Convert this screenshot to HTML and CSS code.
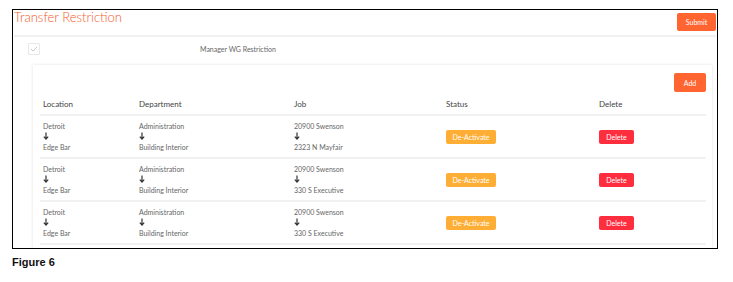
FILE: index.html
```html
<!DOCTYPE html>
<html>
<head>
<meta charset="utf-8">
<link rel="stylesheet" href="styles.css">
</head>
<body>
<div class="frame">
  <div class="topbar">
    <h1 class="title">Transfer Restriction</h1>
    <button class="btn btn-orange btn-submit">Submit</button>
  </div>
  <div class="sep"></div>
  <div class="check-row">
    <span class="checkbox"><svg width="8" height="6" viewBox="0 0 8 6"><path d="M1 3l2 2 4-4" fill="none" stroke="#c8c8c8" stroke-width="1"/></svg></span>
    <span class="check-label">Manager WG Restriction</span>
  </div>
  <div class="card">
    <div class="card-top"><button class="btn btn-orange btn-add">Add</button></div>
    <div class="table">
      <div class="row head">
        <div>Location</div><div>Department</div><div>Job</div><div>Status</div><div>Delete</div>
      </div>
      <div class="row">
        <div class="cell"><span>Detroit</span><svg class="arr" width="6" height="8" viewBox="0 0 6 8"><path d="M3 0.5V7M0.8 4.6L3 7 5.2 4.6" fill="none" stroke="#333" stroke-width="1.2"/></svg><span>Edge Bar</span></div>
        <div class="cell"><span>Administration</span><svg class="arr" width="6" height="8" viewBox="0 0 6 8"><path d="M3 0.5V7M0.8 4.6L3 7 5.2 4.6" fill="none" stroke="#333" stroke-width="1.2"/></svg><span>Building Interior</span></div>
        <div class="cell"><span>20900 Swenson</span><svg class="arr" width="6" height="8" viewBox="0 0 6 8"><path d="M3 0.5V7M0.8 4.6L3 7 5.2 4.6" fill="none" stroke="#333" stroke-width="1.2"/></svg><span>2323 N Mayfair</span></div>
        <div class="cell"><button class="btn btn-yellow">De-Activate</button></div>
        <div class="cell"><button class="btn btn-red">Delete</button></div>
      </div>
      <div class="row">
        <div class="cell"><span>Detroit</span><svg class="arr" width="6" height="8" viewBox="0 0 6 8"><path d="M3 0.5V7M0.8 4.6L3 7 5.2 4.6" fill="none" stroke="#333" stroke-width="1.2"/></svg><span>Edge Bar</span></div>
        <div class="cell"><span>Administration</span><svg class="arr" width="6" height="8" viewBox="0 0 6 8"><path d="M3 0.5V7M0.8 4.6L3 7 5.2 4.6" fill="none" stroke="#333" stroke-width="1.2"/></svg><span>Building Interior</span></div>
        <div class="cell"><span>20900 Swenson</span><svg class="arr" width="6" height="8" viewBox="0 0 6 8"><path d="M3 0.5V7M0.8 4.6L3 7 5.2 4.6" fill="none" stroke="#333" stroke-width="1.2"/></svg><span>330 S Executive</span></div>
        <div class="cell"><button class="btn btn-yellow">De-Activate</button></div>
        <div class="cell"><button class="btn btn-red">Delete</button></div>
      </div>
      <div class="row">
        <div class="cell"><span>Detroit</span><svg class="arr" width="6" height="8" viewBox="0 0 6 8"><path d="M3 0.5V7M0.8 4.6L3 7 5.2 4.6" fill="none" stroke="#333" stroke-width="1.2"/></svg><span>Edge Bar</span></div>
        <div class="cell"><span>Administration</span><svg class="arr" width="6" height="8" viewBox="0 0 6 8"><path d="M3 0.5V7M0.8 4.6L3 7 5.2 4.6" fill="none" stroke="#333" stroke-width="1.2"/></svg><span>Building Interior</span></div>
        <div class="cell"><span>20900 Swenson</span><svg class="arr" width="6" height="8" viewBox="0 0 6 8"><path d="M3 0.5V7M0.8 4.6L3 7 5.2 4.6" fill="none" stroke="#333" stroke-width="1.2"/></svg><span>330 S Executive</span></div>
        <div class="cell"><button class="btn btn-yellow">De-Activate</button></div>
        <div class="cell"><button class="btn btn-red">Delete</button></div>
      </div>
    </div>
  </div>
</div>
<div class="caption">Figure 6</div>
</body>
</html>
```
FILE: styles.css
```css
* { box-sizing: border-box; }
body {
  margin: 0;
  background: #fff;
  font-family: "Lato", "Open Sans", sans-serif;
  color: #555;
}
.frame {
  margin: 9px 0 0 12px;
  width: 706px;
  height: 240px;
  border: 1.5px solid #000;
  overflow: hidden;
  display: flex;
  flex-direction: column;
}
.topbar {
  height: 25px;
  display: flex;
  justify-content: space-between;
  align-items: flex-start;
  padding: 0 1px 0 1px;
}
.title {
  margin: 0;
  font-weight: 300;
  font-size: 13px;
  line-height: 15px;
  color: #f45a2c;
}
.btn {
  border: none;
  border-radius: 2px;
  color: #fff;
  font-family: "Lato", sans-serif;
  font-size: 7px;
  padding: 0;
  display: flex;
  align-items: center;
  justify-content: center;
}
.btn-orange { background: #ff6431; }
.btn-submit { width: 39px; height: 18px; margin-top: 2.5px; }
.btn-add { width: 32px; height: 19px; }
.btn-yellow { background: #ffae35; width: 50px; height: 14px; }
.btn-red { background: #ff2e3f; width: 35px; height: 14px; }
.sep {
  height: 2px;
  background: #f1f1f1;
  margin: 0 1px;
}
.check-row {
  display: flex;
  align-items: center;
  height: 23px;
  padding-left: 15px;
}
.checkbox {
  width: 12px;
  height: 12px;
  border: 1px solid #e8e8e8;
  border-radius: 1px;
  display: flex;
  align-items: center;
  justify-content: center;
}
.check-label {
  margin-left: 160px;
  font-size: 7px;
  color: #666;
}
.card {
  margin: 5px 5px 0 20px;
  flex: 1;
  background: #fff;
  box-shadow: 0 0 3px rgba(0,0,0,0.12);
  padding: 8px 6px 0 7px;
}
.card-top {
  display: flex;
  justify-content: flex-end;
}
.row {
  display: grid;
  grid-template-columns: 96px 155px 152px 153px 1fr;
  padding-left: 3px;
  border-bottom: 2px solid #f1f1f1;
  height: 43px;
  font-size: 7px;
  color: #666;
}
.row.head {
  height: 24px;
  padding-top: 1px;
  align-items: center;
  font-size: 8px;
  color: #444;
}
.cell {
  display: flex;
  flex-direction: column;
  justify-content: center;
  align-items: flex-start;
  line-height: 10.5px;
}
.arr { margin: 1px 0 1.5px 0; }
.caption {
  margin: 7px 0 0 12px;
  font-family: "Liberation Sans", Arial, sans-serif;
  font-weight: bold;
  font-size: 11px;
  color: #111;
}
```
